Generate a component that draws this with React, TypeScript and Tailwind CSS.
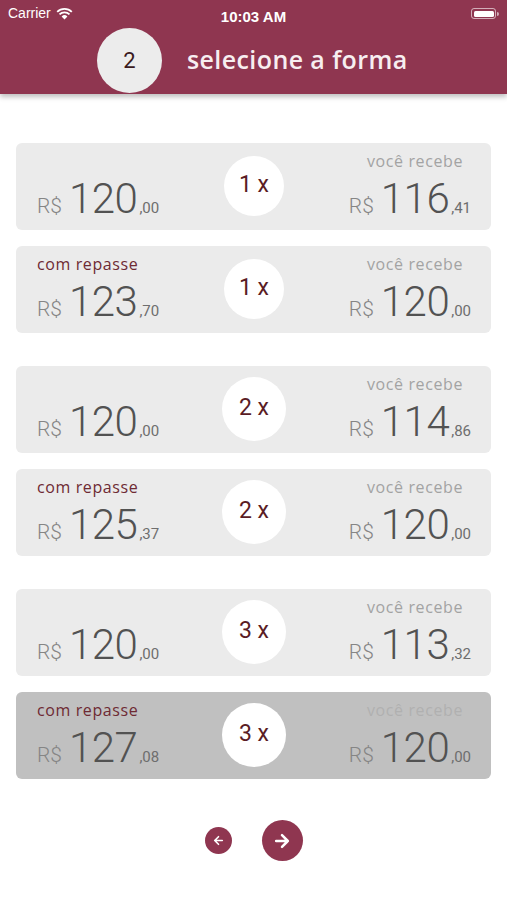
import React from "react";

type Row = {
  label?: boolean;
  left: [string, string];
  right: [string, string];
  n: string;
  selected?: boolean;
  big?: boolean;
};

const groups: Row[][] = [
  [
    { left: ["120", ",00"], right: ["116", ",41"], n: "1 x" },
    { label: true, left: ["123", ",70"], right: ["120", ",00"], n: "1 x" },
  ],
  [
    { left: ["120", ",00"], right: ["114", ",86"], n: "2 x", big: true },
    { label: true, left: ["125", ",37"], right: ["120", ",00"], n: "2 x", big: true },
  ],
  [
    { left: ["120", ",00"], right: ["113", ",32"], n: "3 x", big: true },
    { label: true, left: ["127", ",08"], right: ["120", ",00"], n: "3 x", big: true, selected: true },
  ],
];

function Amount({ v }: { v: [string, string] }) {
  return (
    <div className="flex items-baseline leading-none">
      <span className="text-[21px] font-light text-[#858585] mr-[7px]">R$</span>
      <span className="text-[42px] font-light text-[#525252] tracking-[-0.5px]">{v[0]}</span>
      <span className="text-[15px] text-[#6e6e6e] ml-[2px]">{v[1]}</span>
    </div>
  );
}

function Card({ r }: { r: Row }) {
  return (
    <div
      className={`h-[87px] rounded-[6px] grid grid-cols-[1fr_auto_1fr] items-stretch pl-[21px] pr-[20px] pt-[8px] pb-[10px] ${
        r.selected ? "bg-[#c0c0c0]" : "bg-[#ebebeb]"
      }`}
    >
      <div className="flex flex-col justify-between">
        <div
          className="text-[16px] leading-[20px] tracking-[0.6px] text-[#6e2a33] h-[20px] whitespace-nowrap"
          style={{ fontFamily: "'Open Sans', sans-serif" }}
        >
          {r.label ? "com repasse" : ""}
        </div>
        <Amount v={r.left} />
      </div>
      <div className="flex items-center justify-center">
        <div
          className={`rounded-full bg-white flex items-center justify-center text-[23px] text-[#5a1c25] ${
            r.big ? "w-[64px] h-[64px]" : "w-[60px] h-[60px]"
          }`}
        >
          {r.n}
        </div>
      </div>
      <div className="flex flex-col justify-between items-end">
        <div
          className={`text-[16px] leading-[20px] tracking-[0.6px] pr-[8px] whitespace-nowrap ${
            r.selected ? "text-[#b0b0b0]" : "text-[#a3a3a3]"
          }`}
          style={{ fontFamily: "'Open Sans', sans-serif" }}
        >
          você recebe
        </div>
        <Amount v={r.right} />
      </div>
    </div>
  );
}

export default function App() {
  return (
    <div
      className="w-[507px] h-[900px] bg-white relative overflow-hidden"
      style={{ fontFamily: "Roboto, 'Liberation Sans', sans-serif" }}
    >
      <div className="bg-[#8f3650] h-[94px] shadow-[0_3px_5px_rgba(0,0,0,0.25)] relative z-10">
        <div className="h-[27px] flex items-center justify-between px-[8px] text-white">
          <div className="flex items-center gap-[5px] text-[14px]" style={{ fontFamily: "'Liberation Sans', sans-serif" }}>
            <span>Carrier</span>
            <svg width="17" height="12" viewBox="0 0 17 12">
              <path d="M8.5 11.5 L5.6 8.4 A4.2 4.2 0 0 1 11.4 8.4 Z" fill="white" />
              <path d="M3.5 6.3 A7.2 7.2 0 0 1 13.5 6.3" stroke="white" strokeWidth="1.8" fill="none" />
              <path d="M1.2 3.9 A10.4 10.4 0 0 1 15.8 3.9" stroke="white" strokeWidth="1.8" fill="none" />
            </svg>
          </div>
          <div
            className="absolute left-0 right-0 top-[6px] text-center text-[15px] font-semibold"
            style={{ fontFamily: "'Liberation Sans', sans-serif" }}
          >
            10:03 AM
          </div>
          <div className="flex items-center">
            <div className="w-[25px] h-[11px] rounded-[3px] border border-white/60 p-[1.5px]">
              <div className="w-full h-full bg-white rounded-[1.5px]" />
            </div>
            <div className="w-[2px] h-[4px] bg-white/60 rounded-r-sm ml-[1px]" />
          </div>
        </div>
        <div className="flex items-center h-[67px] pl-[97px] gap-[25px]">
          <div className="w-[65px] h-[65px] rounded-full bg-[#ececec] flex items-center justify-center text-[22px] text-[#3a1a20] mt-[-1px]">
            2
          </div>
          <div
            className="text-[25px] text-[#f7eef0] font-semibold tracking-[0.4px] mt-[-2px]"
            style={{ fontFamily: "'Open Sans', sans-serif" }}
          >
            selecione a forma
          </div>
        </div>
      </div>

      <div className="px-[16px] pt-[49px] flex flex-col gap-[33px]">
        {groups.map((g, i) => (
          <div key={i} className="flex flex-col gap-[16px]">
            {g.map((r, j) => (
              <Card key={j} r={r} />
            ))}
          </div>
        ))}
      </div>

      <div className="flex items-center justify-center gap-[30px] mt-[41px]">
        <div className="w-[27px] h-[27px] rounded-full bg-[#8f3650] flex items-center justify-center">
          <svg width="13" height="13" viewBox="0 0 24 24" fill="none" stroke="white" strokeWidth="3" strokeLinecap="round" strokeLinejoin="round">
            <path d="M19 12H5M12 19l-7-7 7-7" />
          </svg>
        </div>
        <div className="w-[41px] h-[41px] rounded-full bg-[#8f3650] flex items-center justify-center">
          <svg width="20" height="20" viewBox="0 0 24 24" fill="none" stroke="white" strokeWidth="3" strokeLinecap="round" strokeLinejoin="round">
            <path d="M5 12h14M12 5l7 7-7 7" />
          </svg>
        </div>
      </div>
    </div>
  );
}
